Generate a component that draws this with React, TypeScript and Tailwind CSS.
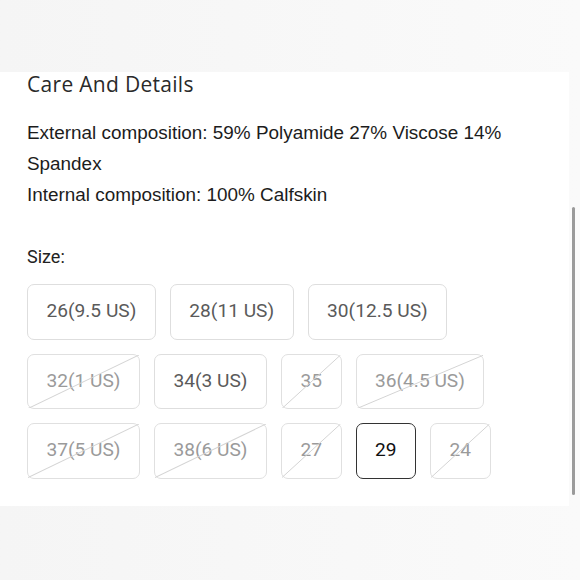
import React from "react";

type Size = { label: string; disabled?: boolean; selected?: boolean };

const ROWS: Size[][] = [
  [{ label: "26(9.5 US)" }, { label: "28(11 US)" }, { label: "30(12.5 US)" }],
  [
    { label: "32(1 US)", disabled: true },
    { label: "34(3 US)" },
    { label: "35", disabled: true },
    { label: "36(4.5 US)", disabled: true },
  ],
  [
    { label: "37(5 US)", disabled: true },
    { label: "38(6 US)", disabled: true },
    { label: "27", disabled: true },
    { label: "29", selected: true },
    { label: "24", disabled: true },
  ],
];

function SizeButton({ size }: { size: Size }) {
  const tone = size.selected
    ? "border-[#333] text-[#111] border-[1.5px]"
    : size.disabled
      ? "border-[#e0e0e0] text-[#9a9a9a] border"
      : "border-[#dedede] text-[#5a5a5a] border";
  return (
    <button
      type="button"
      className={`relative flex h-[55.5px] items-center justify-center rounded-[7px] bg-white px-[18.5px] text-[19.15px] ${tone}`}
    >
      {size.label}
      {size.disabled && (
        <svg className="absolute inset-0 h-full w-full" preserveAspectRatio="none" viewBox="0 0 100 100">
          <line x1="0" y1="100" x2="100" y2="0" stroke="#d4d4d4" strokeWidth="1" vectorEffect="non-scaling-stroke" />
        </svg>
      )}
    </button>
  );
}

export default function App() {
  return (
    <div className="relative h-[580px] w-[580px] overflow-hidden bg-gradient-to-r from-[#f5f5f5] to-[#fafafa]">
      <div className="h-[72px]" />
      <div className="h-[434px] w-[569px] bg-white px-[27px]">
        <h2 className="pt-[1px] text-[21px] leading-[22px] tracking-[0.3px] text-[#2a2a2a]" style={{ fontFamily: '"Open Sans", sans-serif' }}>
          Care And Details
        </h2>
        <p className="mt-[22px] text-[18.9px] leading-[31px] text-[#1c1c1c]" style={{ fontFamily: '"Liberation Sans", Arial, sans-serif' }}>
          External composition: 59% Polyamide 27% Viscose 14% Spandex
          <br />
          Internal composition: 100% Calfskin
        </p>
        <div style={{ fontFamily: "Roboto, sans-serif" }}>
          <p className="mt-[36px] text-[18px] leading-[22px] text-[#222]">Size:</p>
          <div className="mt-[16px] flex flex-col gap-[14px]">
            {ROWS.map((row, i) => (
              <div key={i} className="flex gap-[14px]">
                {row.map((s) => (
                  <SizeButton key={s.label} size={s} />
                ))}
              </div>
            ))}
          </div>
        </div>
      </div>
      <div className="absolute left-[572px] top-[207px] h-[288px] w-[3px] rounded-full bg-[#9a9a9a]" />
    </div>
  );
}
